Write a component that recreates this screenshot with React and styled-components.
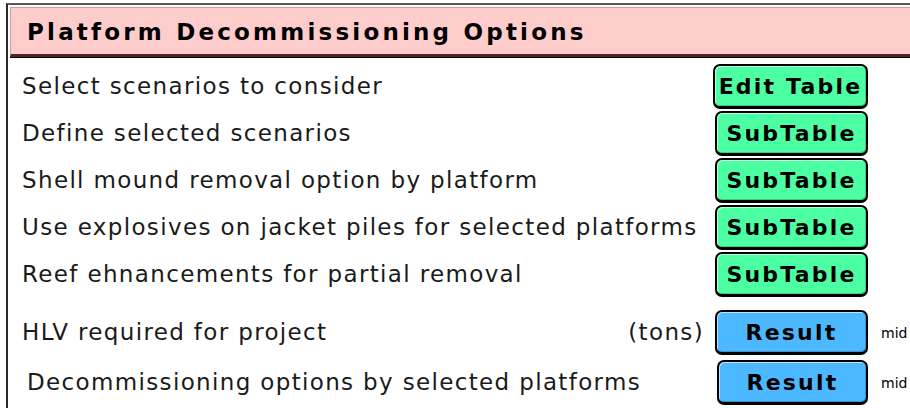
import React from 'react';
import styled, { createGlobalStyle } from 'styled-components';

const GlobalStyle = createGlobalStyle`
  html, body {
    margin: 0;
    padding: 0;
    background: #ffffff;
    overflow: hidden;
  }
`;

const Panel = styled.div`
  margin: 3px 0 0 6px;
  border-top: 2px solid #5a5a5a;
  border-left: 2px solid #2a2a2a;
  height: 410px;
  padding-top: 2px;
  padding-left: 2px;
  font-family: 'DejaVu Sans', Verdana, sans-serif;
`;

const Header = styled.div`
  height: 44px;
  background: #ffcccc;
  border-top: 1px solid #c8a0a0;
  border-left: 1px solid #c8a0a0;
  border-bottom: 3px solid #5a2020;
  box-shadow: 0 1px 0 #000;
  display: flex;
  align-items: center;
  padding-left: 16px;
  padding-top: 2px;
  font-weight: bold;
  font-size: 23px;
  letter-spacing: 3.2px;
  color: #000;
`;

const Rows = styled.div`
  padding-top: 6px;
  display: flex;
  flex-direction: column;
`;

const Row = styled.div`
  display: grid;
  grid-template-columns: 703px 155px auto;
  align-items: center;
  height: 47px;
  margin-top: ${(p) => p.$gap || 0}px;
`;

const Label = styled.div`
  display: flex;
  justify-content: space-between;
  padding-left: ${(p) => p.$indent || 12}px;
  padding-right: 9px;
  padding-bottom: 2px;
  font-size: 23px;
  letter-spacing: 1.35px;
  color: #1a1a1a;
  white-space: nowrap;
`;

const Button = styled.div`
  height: 45px;
  box-sizing: border-box;
  margin-left: ${(p) => p.$shift || 0}px;
  border: 2px solid #000;
  border-bottom-width: 3px;
  border-radius: 7px;
  background: ${(p) => (p.$kind === 'result' ? '#4cb8ff' : '#4dffa3')};
  box-shadow: inset 1px 1px 0 #ffffff99, inset -1px -1px 0 #00000033;
  display: flex;
  align-items: center;
  justify-content: center;
  font-weight: bold;
  font-size: 22px;
  letter-spacing: 2.2px;
  color: #000;
`;

const Note = styled.div`
  padding-left: 13px;
  font-size: 14px;
  color: #000;
  white-space: nowrap;
`;

const options = [
  { label: 'Select scenarios to consider', button: 'Edit Table' },
  { label: 'Define selected scenarios', button: 'SubTable', shift: 2 },
  { label: 'Shell mound removal option by platform', button: 'SubTable', shift: 2 },
  { label: 'Use explosives on jacket piles for selected platforms', button: 'SubTable', shift: 2 },
  { label: 'Reef ehnancements for partial removal', button: 'SubTable', shift: 2 },
];

const results = [
  { label: 'HLV required for project', unit: '(tons)', shift: 2, gap: 11 },
  { label: 'Decommissioning options by selected platforms', shift: 4, indent: 17, gap: 3 },
];

export default function App() {
  return (
    <>
      <GlobalStyle />
      <Panel>
        <Header>Platform Decommissioning Options</Header>
        <Rows>
          {options.map((o) => (
            <Row key={o.label}>
              <Label>{o.label}</Label>
              <Button $shift={o.shift}>{o.button}</Button>
              <Note />
            </Row>
          ))}
          {results.map((r) => (
            <Row key={r.label} $gap={r.gap}>
              <Label $indent={r.indent}>
                <span>{r.label}</span>
                {r.unit && <span>{r.unit}</span>}
              </Label>
              <Button $kind="result" $shift={r.shift}>Result</Button>
              <Note>mid</Note>
            </Row>
          ))}
        </Rows>
      </Panel>
    </>
  );
}
